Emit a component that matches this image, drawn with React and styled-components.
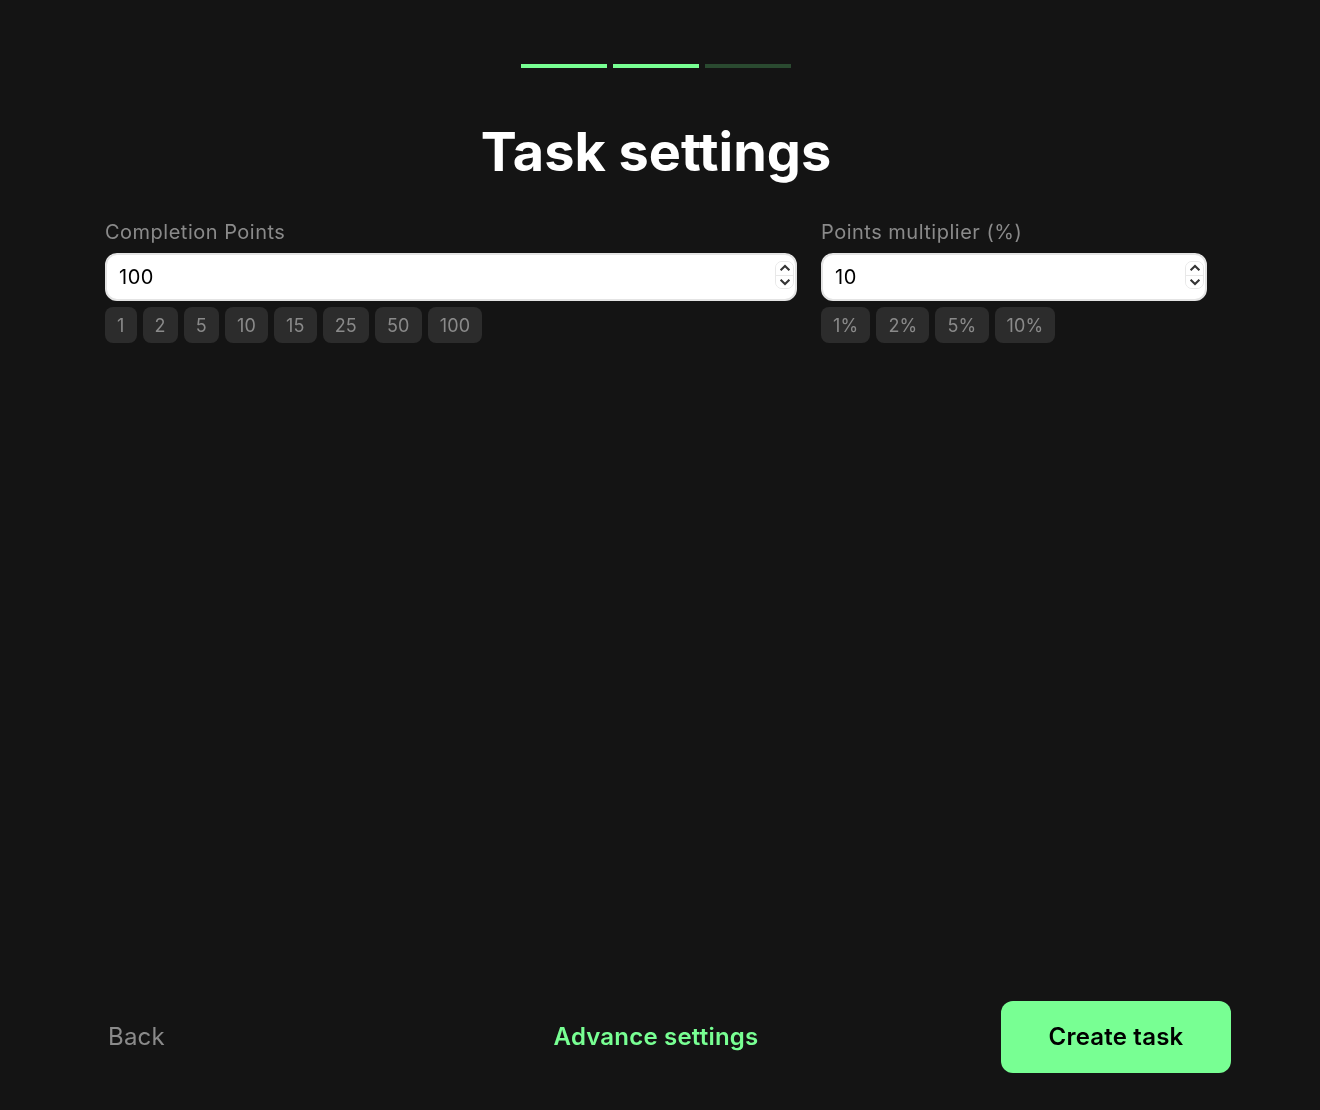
import React, { useState } from "react";
import styled, { createGlobalStyle } from "styled-components";

const GlobalStyle = createGlobalStyle`
  html, body {
    margin: 0;
    padding: 0;
    background: #141414;
  }
  * {
    box-sizing: border-box;
  }
`;

const pointPresets = ["1", "2", "5", "10", "15", "25", "50", "100"];
const multiplierPresets = ["1%", "2%", "5%", "10%"];

function NumberField({ id, label, width, value, onChange, presets }) {
  const step = (by) => onChange(String(Number(value) + by));

  return (
    <Field $width={width}>
      <Label htmlFor={id}>{label}</Label>
      <InputWrap>
        <Input id={id} type="number" value={value} onChange={(e) => onChange(e.target.value)} />
        <Spinner>
          <SpinButton type="button" aria-label="Increase" onClick={() => step(1)}>
            <svg width="12" height="8" viewBox="0 0 12 8">
              <path d="M1.6 6.2 6 2l4.4 4.2" fill="none" stroke="#333" strokeWidth="2.1" />
            </svg>
          </SpinButton>
          <SpinButton type="button" aria-label="Decrease" onClick={() => step(-1)}>
            <svg width="12" height="8" viewBox="0 0 12 8">
              <path d="M1.6 1.8 6 6l4.4-4.2" fill="none" stroke="#333" strokeWidth="2.1" />
            </svg>
          </SpinButton>
        </Spinner>
      </InputWrap>
      <Presets>
        {presets.map((p) => (
          <Preset key={p} onClick={() => onChange(p.replace("%", ""))}>{p}</Preset>
        ))}
      </Presets>
    </Field>
  );
}

export default function App() {
  const [points, setPoints] = useState("100");
  const [multiplier, setMultiplier] = useState("10");

  return (
    <Page>
      <GlobalStyle />
      <Steps>
        <Step $done />
        <Step $done />
        <Step />
      </Steps>
      <Title>Task settings</Title>
      <Form>
        <NumberField
          id="points"
          label="Completion Points"
          width="692px"
          value={points}
          onChange={setPoints}
          presets={pointPresets}
        />
        <NumberField
          id="multiplier"
          label="Points multiplier (%)"
          width="386px"
          value={multiplier}
          onChange={setMultiplier}
          presets={multiplierPresets}
        />
      </Form>
      <Footer>
        <BackButton>Back</BackButton>
        <AdvanceButton>Advance settings</AdvanceButton>
        <CreateButton>Create task</CreateButton>
      </Footer>
    </Page>
  );
}

const Page = styled.div`
  min-height: 100vh;
  display: flex;
  flex-direction: column;
  padding: 64px 97px 37px 89px;
  font-family: Inter, "Liberation Sans", sans-serif;
  color: #fff;
  will-change: transform;
`;

const Steps = styled.div`
  display: flex;
  justify-content: center;
  gap: 6px;
`;

const Step = styled.div`
  width: 86px;
  height: 4px;
  background: ${(p) => (p.$done ? "#78ff93" : "#2a4a30")};
`;

const Title = styled.h1`
  margin: 50px 0 0;
  font-size: 54px;
  line-height: 68px;
  font-weight: 700;
  text-align: center;
`;

const Form = styled.div`
  flex: 1;
  display: flex;
  align-items: flex-start;
  gap: 24px;
  margin-top: 32px;
  padding-left: 16px;
`;

const Field = styled.div`
  width: ${(p) => p.$width};
  display: flex;
  flex-direction: column;
`;

const Label = styled.label`
  font-size: 20px;
  line-height: 28px;
  letter-spacing: 0.5px;
  color: #8a8a8a;
  margin-bottom: 7px;
`;

const InputWrap = styled.div`
  position: relative;
  height: 48px;
`;

const Input = styled.input`
  width: 100%;
  height: 100%;
  padding: 0 30px 0 12px;
  border: 2px solid #e4e4e4;
  border-radius: 12px;
  background: #fff;
  color: #000;
  font-family: inherit;
  font-size: 20px;
  letter-spacing: 0.5px;
  outline: none;
  appearance: textfield;

  &::-webkit-inner-spin-button,
  &::-webkit-outer-spin-button {
    appearance: none;
    margin: 0;
  }
`;

const Spinner = styled.div`
  position: absolute;
  top: 8px;
  right: 3px;
  width: 19px;
  height: 28px;
  display: flex;
  flex-direction: column;
  border: 1px solid #e8e8e8;
  border-radius: 7px;
  overflow: hidden;
`;

const SpinButton = styled.button`
  flex: 1;
  display: flex;
  align-items: center;
  justify-content: center;
  padding: 0;
  border: none;
  background: #fff;
  cursor: pointer;

  & + & {
    border-top: 1px solid #e8e8e8;
  }
`;

const Presets = styled.div`
  display: flex;
  gap: 6px;
  margin-top: 6px;
`;

const Preset = styled.button`
  height: 36px;
  padding: 0 12px;
  border: none;
  border-radius: 8px;
  background: #2c2c2c;
  color: #8a8a8a;
  font-family: inherit;
  font-size: 18px;
  letter-spacing: 0.2px;
  cursor: pointer;
`;

const Footer = styled.div`
  display: grid;
  grid-template-columns: 1fr auto 1fr;
  align-items: center;
`;

const TextButton = styled.button`
  border: none;
  background: none;
  padding: 0 0 2px;
  font-family: inherit;
  font-size: 24px;
  cursor: pointer;
`;

const BackButton = styled(TextButton)`
  justify-self: start;
  margin-left: 19px;
  color: #8a8a8a;
  letter-spacing: 0.2px;
`;

const AdvanceButton = styled(TextButton)`
  color: #78ff93;
  font-weight: 600;
  letter-spacing: 0.2px;
`;

const CreateButton = styled.button`
  justify-self: end;
  width: 230px;
  height: 72px;
  padding: 0 0 2px;
  margin-right: -8px;
  border: none;
  border-radius: 12px;
  background: #78ff93;
  color: #000;
  font-family: inherit;
  font-size: 24px;
  font-weight: 600;
  letter-spacing: 0.2px;
  cursor: pointer;
`;
